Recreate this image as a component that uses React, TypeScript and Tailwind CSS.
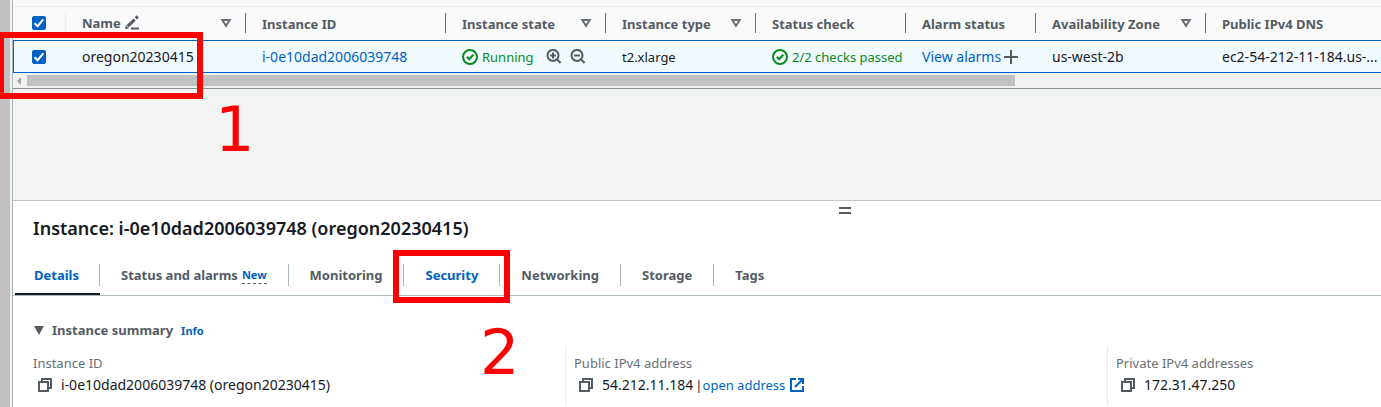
import React from "react";

type IconProps = { className?: string };

const SortIcon = ({ className = "" }: IconProps) => (
  <svg className={`h-4 w-4 shrink-0 ${className}`} viewBox="0 0 16 16" fill="none" stroke="#687078" strokeWidth="2" aria-hidden="true">
    <path d="M4.3 5h7.4L8 10.8z" />
  </svg>
);

const EditIcon = () => (
  <svg className="h-4 w-4 shrink-0" viewBox="0 0 16 16" aria-hidden="true">
    <path d="M2.6 11.4 9.6 4.6M10.8 3.4 12.8 1.4" stroke="#545b64" strokeWidth="3" />
    <path d="M0 14.2l1-3.8 2.8 2.8z" fill="#545b64" />
    <path d="M6 13.5h8" stroke="#545b64" strokeWidth="2" />
  </svg>
);

const CheckCircleIcon = () => (
  <svg className="h-4 w-4 shrink-0" viewBox="0 0 16 16" fill="none" stroke="#0a8a1c" strokeWidth="2" aria-hidden="true">
    <circle cx="8" cy="8" r="7" />
    <path d="M4.8 7.8 7.2 10.2 11.3 5.8" />
  </svg>
);

const MagnifyIcon = ({ plus = false }: { plus?: boolean }) => (
  <svg className="h-4 w-4" viewBox="0 0 16 16" fill="none" stroke="#545b64" strokeWidth="2" aria-hidden="true">
    <circle cx="7" cy="6.4" r="5.5" />
    <path d="M11 10.4 14.6 14M4 6.4h6" />
    {plus && <path d="M7 3.4v6" />}
  </svg>
);

const PlusIcon = () => (
  <svg className="h-4 w-4" viewBox="0 0 16 16" stroke="#545b64" strokeWidth="2" aria-hidden="true">
    <path d="M8 1v14M1 8h14" />
  </svg>
);

const CopyIcon = () => (
  <svg className="h-4 w-4" viewBox="0 0 16 16" fill="none" stroke="#545b64" strokeWidth="2" aria-hidden="true">
    <path d="M2 5h9v9H2zM5 5V2h9v9h-3" />
  </svg>
);

const ExternalIcon = () => (
  <svg className="h-4 w-4" viewBox="0 0 16 16" fill="none" stroke="#0062c2" strokeWidth="2" aria-hidden="true">
    <path d="M7 2H2v12h12V9M9 2h5v5M14 2 6 10" />
  </svg>
);

const Checkbox = ({ label }: { label: string }) => (
  <label className="relative flex h-[14px] w-[14px]">
    <input
      type="checkbox"
      defaultChecked
      aria-label={label}
      className="peer h-[14px] w-[14px] appearance-none rounded-xs border border-[#879596] bg-white checked:border-[#0062c2] checked:bg-[#0062c2]"
    />
    <svg className="pointer-events-none absolute inset-0 hidden h-[14px] w-[14px] peer-checked:block" viewBox="0 0 14 14" fill="none" stroke="#fff" strokeWidth="2" aria-hidden="true">
      <path d="M2.5 7.2 5.6 10.2 11.3 3.4" />
    </svg>
  </label>
);

const columns = [
  { name: "Name", width: "w-[180px]", sort: true, edit: true },
  { name: "Instance ID", width: "w-[200px]" },
  { name: "Instance state", width: "w-[160px]", sort: true },
  { name: "Instance type", width: "w-[150px]", sort: true },
  { name: "Status check", width: "w-[150px]" },
  { name: "Alarm status", width: "w-[130px]" },
  { name: "Availability Zone", width: "w-[170px]", sort: true },
  { name: "Public IPv4 DNS", width: "w-auto", last: true },
];

const cell = "h-[33px] border-y border-[#0062c2] p-0 pl-4";

function InstancesTable() {
  return (
    <table className="w-full table-fixed border-separate border-spacing-0 text-left text-[13px] leading-5 whitespace-nowrap">
      <thead>
        <tr>
          <th className="h-[33px] w-[53px] p-0 pt-1.5 align-top">
            <div className="flex h-5 items-center border-r border-[#eaeded] pl-[19px]">
              <Checkbox label="Select all instances" />
            </div>
          </th>
          {columns.map((c) => (
            <th key={c.name} scope="col" className={`${c.width} h-[33px] p-0 pt-1.5 align-top font-bold text-[#545b64]`}>
              <div className={`flex h-5 items-center pl-4 ${c.last ? "" : "border-r border-[#687078]"}`}>
                <span className={c.edit ? "" : "pt-0.5"}>{c.name}</span>
                {c.edit && (
                  <button type="button" aria-label="Edit name" className="ml-1">
                    <EditIcon />
                  </button>
                )}
                {c.sort && (
                  <button type="button" aria-label={`Sort by ${c.name}`} className="mr-[11px] ml-auto">
                    <SortIcon />
                  </button>
                )}
              </div>
            </th>
          ))}
        </tr>
      </thead>
      <tbody>
        <tr className="bg-[#f1faff] text-[#16191f]">
          <td className="h-[33px] border-y border-l border-[#0062c2] p-0 pl-[18px]">
            <Checkbox label="Select oregon20230415" />
          </td>
          <td className={`${cell} text-sm`}>oregon20230415</td>
          <td className={`${cell} text-sm`}>
            <a href="#instance" className="text-[#0062c2]">i-0e10dad2006039748</a>
          </td>
          <td className={cell}>
            <div className="flex items-center text-[#0a8a1c]">
              <CheckCircleIcon />
              <span className="ml-1">Running</span>
              <button type="button" aria-label="Filter in" className="ml-3"><MagnifyIcon plus /></button>
              <button type="button" aria-label="Filter out" className="ml-2"><MagnifyIcon /></button>
            </div>
          </td>
          <td className={cell}>t2.xlarge</td>
          <td className={cell}>
            <div className="flex items-center gap-1 text-[#0a8a1c]">
              <CheckCircleIcon />
              <span>2/2 checks passed</span>
            </div>
          </td>
          <td className={cell}>
            <div className="flex items-center gap-0.5">
              <a href="#alarms" className="text-sm text-[#0062c2]">View alarms</a>
              <button type="button" aria-label="Add alarm"><PlusIcon /></button>
            </div>
          </td>
          <td className={`${cell} text-sm`}>us-west-2b</td>
          <td className={`${cell} overflow-hidden text-sm`}>ec2-54-212-11-184.us-...</td>
        </tr>
      </tbody>
    </table>
  );
}

const tabs = ["Details", "Status and alarms", "Monitoring", "Security", "Networking", "Storage", "Tags"];

function Tabs() {
  return (
    <div role="tablist" className="flex h-[42px] border-b border-[#aab7b8] pl-0.5 text-[13px] leading-[22px] font-bold whitespace-nowrap text-[#545b64]">
      {tabs.map((t) => (
        <button
          key={t}
          type="button"
          role="tab"
          aria-selected={t === "Details"}
          className={`flex flex-col pt-[10px] ${t === "Details" ? "border-b-2 border-[#16191f] text-[#0062c2]" : ""} ${t === "Security" ? "text-[#0062c2]" : ""}`}
        >
          <span className={`flex h-[22px] items-center ${t === "Details" ? "pr-5 pl-[19px]" : "px-[21px]"} ${t === "Tags" ? "" : "border-r border-[#aab7b8]"}`}>
            {t}
            {t === "Status and alarms" && (
              <span className="ml-1 border-b border-dashed border-[#545b64] text-[11px] leading-4 text-[#0062c2]">New</span>
            )}
          </span>
        </button>
      ))}
    </div>
  );
}

function Field({ label, first, children }: { label: string; first?: boolean; children: React.ReactNode }) {
  return (
    <div className={`pt-1.5 leading-[22px] whitespace-nowrap ${first ? "" : "border-l border-[#eaeded] pl-2"}`}>
      <dt className="text-[13px] text-[#687078]">{label}</dt>
      <dd className="flex items-center pl-1 text-sm leading-[22px] text-[#16191f]">
        <button type="button" aria-label={`Copy ${label}`} className="mr-2"><CopyIcon /></button>
        {children}
      </dd>
    </div>
  );
}

function DetailPanel() {
  return (
    <section className="flex-1 border-t border-[#c6c6c6] bg-white">
      <h2 className="pt-[15px] pb-[14px] pl-5 text-lg leading-6 font-semibold text-[#16191f]">
        Instance: i-0e10dad2006039748 (oregon20230415)
      </h2>
      <Tabs />
      <div className="pt-6 pl-5">
        <h3 className="flex h-[22px] items-center text-[13px] font-bold text-[#545b64]">
          <button type="button" aria-expanded="true" className="flex items-center">
            <svg className="mr-[7px] h-3 w-3" viewBox="0 0 12 12" fill="#545b64" aria-hidden="true">
              <path d="M1 1h10L6 10z" />
            </svg>
            Instance summary
          </button>
          <a href="#info" className="ml-2 text-[11px] text-[#0062c2]">Info</a>
        </h3>
        <dl className="grid h-16 grid-cols-[532fr_542fr_274fr] pt-1">
          <Field label="Instance ID" first>i-0e10dad2006039748 (oregon20230415)</Field>
          <Field label="Public IPv4 address">
            <span className="mr-0.5">54.212.11.184</span>
            <span className="text-[13px]">|</span>
            <a href="#open" className="flex items-center gap-1 text-[13px] text-[#0062c2]">open address <ExternalIcon /></a>
          </Field>
          <Field label="Private IPv4 addresses">172.31.47.250</Field>
        </dl>
      </div>
    </section>
  );
}

export default function App() {
  return (
    <div className="relative flex min-h-screen overflow-hidden bg-[#f2f3f3] font-['Noto_Sans',sans-serif]">
      <div className="w-[10px] shrink-0 bg-[#c1c1c1]" />
      <div className="w-[2px] shrink-0 bg-[#f1f1f1]" />
      <main className="flex min-w-0 flex-1 flex-col border-l border-[#aab7b8]">
        <div className="border-b border-[#879596] bg-[#fafafa]">
          <div className="h-[7px] border-b border-[#eaeded]" />
          <InstancesTable />
          <div className="flex h-[15px] items-center bg-[#f1f1f1]">
            <svg className="h-[14px] w-[14px]" viewBox="0 0 14 14" fill="#a3a3a3" aria-hidden="true">
              <path d="M4 7l4-4v8z" />
            </svg>
            <div className="h-[11px] flex-[27] bg-[#c1c1c1]" />
            <div className="flex-[10]" />
          </div>
        </div>
        <div className="h-[111px]" />
        <DetailPanel />
      </main>
      <button type="button" aria-label="Resize panel" className="absolute top-[207px] left-[839px] h-[7px] w-3 border-y-2 border-[#545b64]" />
      <div className="pointer-events-none absolute top-8 -left-0.5 h-[67px] w-[205px] border-6 border-[#ff0000]" />
      <div className="pointer-events-none absolute top-[250px] left-[393px] h-[53px] w-[117px] border-6 border-[#ff0000]" />
      <span className="absolute top-[99px] left-[215px] font-['DejaVu_Sans',sans-serif] text-[62px] leading-none text-[#ff0000]">1</span>
      <span className="absolute top-[322px] left-[480px] font-['DejaVu_Sans',sans-serif] text-[62px] leading-none text-[#ff0000]">2</span>
    </div>
  );
}
